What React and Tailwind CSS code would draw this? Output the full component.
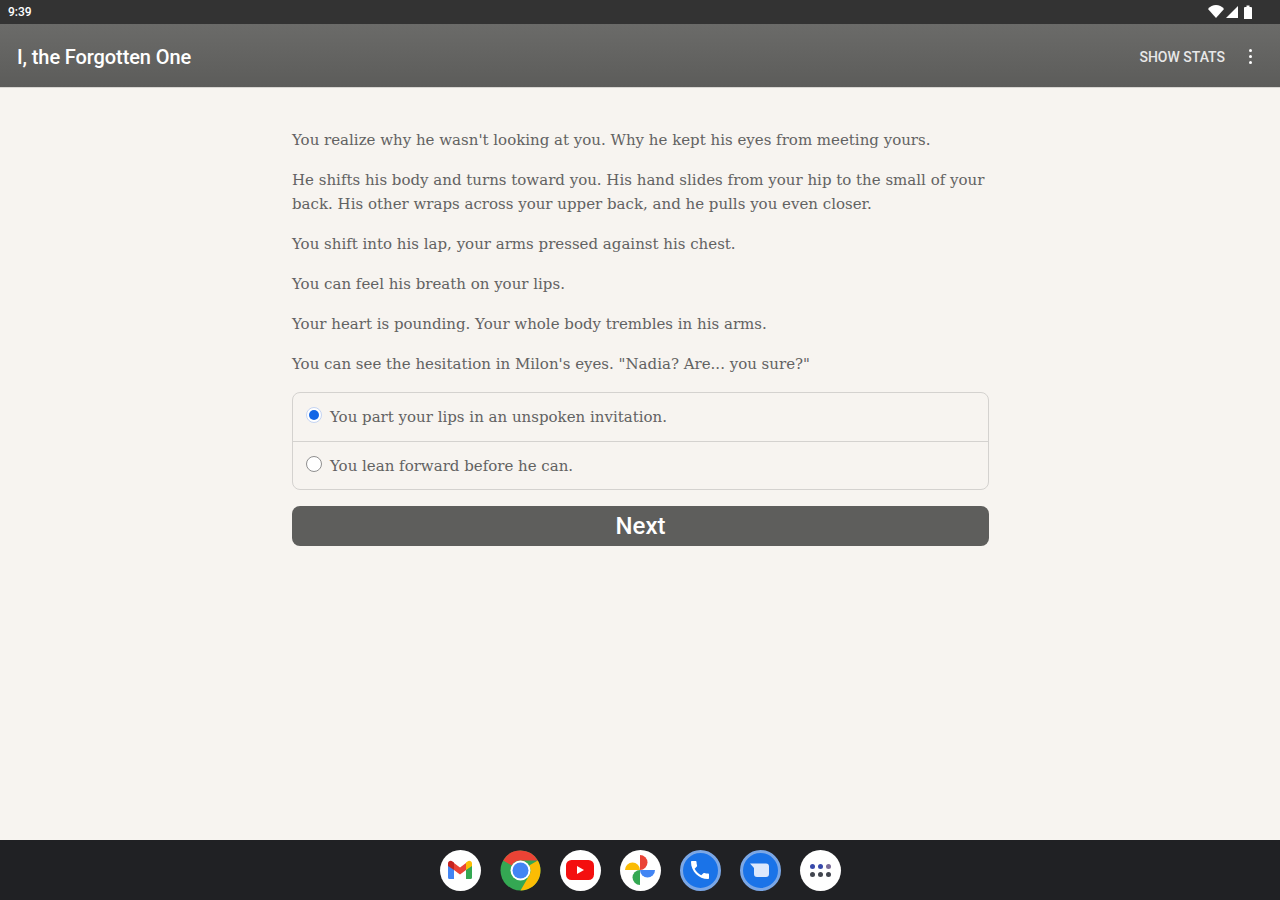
const paragraphs = [
  "You realize why he wasn't looking at you. Why he kept his eyes from meeting yours.",
  'He shifts his body and turns toward you. His hand slides from your hip to the small of your back. His other wraps across your upper back, and he pulls you even closer.',
  'You shift into his lap, your arms pressed against his chest.',
  'You can feel his breath on your lips.',
  'Your heart is pounding. Your whole body trembles in his arms.',
  'You can see the hesitation in Milon\'s eyes. "Nadia? Are... you sure?"',
]

const choices = [
  { label: 'You part your lips in an unspoken invitation.', selected: true },
  { label: 'You lean forward before he can.', selected: false },
]

function StatusIcons() {
  return (
    <svg width="47" height="16" viewBox="0 0 47 16" fill="white">
      <path d="M0 5C4 -0.500 12 -0.500 16 5L8 14Z" />
      <path d="M30 2V14H18Z" />
      <path d="M36 4a1 1 0 0 1 1-1h1.500V1.500h3V3H43a1 1 0 0 1 1 1V15h-8Z" />
    </svg>
  )
}

function GmailIcon() {
  return (
    <svg width="28" height="22" viewBox="0 0 28 22" fill="none">
      <path d="M2 20V6l6 4.500V20H3.500A1.500 1.500 0 0 1 2 18.500Z" fill="#4285f4" />
      <path d="M26 20V6l-6 4.500V20h4.500a1.500 1.500 0 0 0 1.500-1.500Z" fill="#34a853" />
      <path d="M8 11V4l6 4.500L20 4v7l-6 4.500Z" fill="#ea4335" />
      <path d="M2 7V4.500C2 2 4.800 1 6.500 2.400L8 3.500V11Z" fill="#c5221f" />
      <path d="M26 7V4.500C26 2 23.200 1 21.500 2.400L20 3.500V11Z" fill="#fbbc04" />
    </svg>
  )
}

function ChromeIcon() {
  return (
    <svg width="41" height="41" viewBox="0 0 41 41">
      <circle cx="20.500" cy="20.500" r="20" fill="#34a853" />
      <path d="M20.500 .5A20 20 0 0 1 37.800 10.500H20.500A10 10 0 0 0 11.800 15.500L3.200 10.500A20 20 0 0 1 20.500 .5Z" fill="#ea4335" />
      <path d="M37.800 10.500A20 20 0 0 1 20.500 40.500L29.200 25.500A10 10 0 0 0 29.200 15.500Z" fill="#fbbc04" />
      <circle cx="20.500" cy="20.500" r="10" fill="white" />
      <circle cx="20.500" cy="20.500" r="8" fill="#4285f4" />
    </svg>
  )
}

function YoutubeIcon() {
  return (
    <svg width="28" height="20" viewBox="0 0 28 20">
      <rect width="28" height="20" rx="5.500" fill="#f40f0f" />
      <path d="M11 6v8l7-4Z" fill="white" />
    </svg>
  )
}

function PhotosIcon() {
  return (
    <svg width="30" height="30" viewBox="0 0 32 32">
      <path d="M8 8a8 8 0 0 1 8 8H0a8 8 0 0 1 8-8Z" fill="#fbbc04" />
      <path d="M16 0a8 8 0 0 1 0 16Z" fill="#ea4335" />
      <path d="M32 16a8 8 0 0 1-16 0Z" fill="#4285f4" />
      <path d="M16 16v16a8 8 0 0 1 0-16Z" fill="#34a853" />
    </svg>
  )
}

function CallIcon() {
  return (
    <svg width="24" height="24" viewBox="0 0 24 24" fill="white">
      <path d="M20 15.500c-1.250 0-2.450-.2-3.570-.57-.35-.11-.74-.03-1.020.24l-2.200 2.200c-2.830-1.440-5.150-3.750-6.590-6.590l2.200-2.210c.28-.26.36-.65.25-1C8.700 6.450 8.500 5.250 8.500 4c0-.55-.45-1-1-1H4c-.55 0-1 .45-1 1 0 9.390 7.610 17 17 17 .55 0 1-.45 1-1v-3.500c0-.55-.45-1-1-1z" />
    </svg>
  )
}

function MessagesIcon() {
  return (
    <svg width="20" height="15" viewBox="0 0 20 15" fill="#dce8fc">
      <path d="M0 0.500H16a3 3 0 0 1 3 3V11a3 3 0 0 1-3 3H7a3 3 0 0 1-3-3V5Z" />
    </svg>
  )
}

function DockIcon({ className = 'bg-white', children }) {
  return (
    <div className={`flex h-[41px] w-[41px] items-center justify-center rounded-full ${className}`}>
      {children}
    </div>
  )
}

export default function App() {
  return (
    <div className="flex h-[900px] flex-col bg-[#f7f4f0]">
      <div className="flex h-6 shrink-0 items-center justify-between bg-[#333333] pl-2 pr-[25px]">
        <span className="font-['Roboto',sans-serif] text-xs font-medium text-white">9:39</span>
        <StatusIcons />
      </div>

      <header className="flex h-16 shrink-0 items-center justify-between border-b border-[#d8d6d2] bg-gradient-to-b from-[#6b6b69] to-[#5c5c5a] pl-[17px] pr-7 pt-0.5 font-['Roboto',sans-serif] text-white">
        <h1 className="text-xl font-medium tracking-[-0.1px]">I, the Forgotten One</h1>
        <div className="flex items-center gap-6">
          <span className="text-sm font-medium text-[#e8e8e8]">SHOW STATS</span>
          <div className="flex flex-col gap-[3px]">
            <span className="h-[3px] w-[3px] rounded-full bg-white" />
            <span className="h-[3px] w-[3px] rounded-full bg-white" />
            <span className="h-[3px] w-[3px] rounded-full bg-white" />
          </div>
        </div>
      </header>

      <main className="flex-1 overflow-hidden pl-[292px]">
        <div className="w-[697px] pt-10 font-['DejaVu_Serif',serif] text-[15px] leading-6 text-[#626262]">
          <div className="space-y-4">
            {paragraphs.map((text) => (
              <p key={text}>{text}</p>
            ))}
          </div>

          <div className="mt-4 overflow-hidden rounded-lg border border-[#d4d2cf]">
            {choices.map((choice, index) => (
              <div
                key={choice.label}
                className={`flex h-12 items-center gap-2 pl-[13px] ${index > 0 ? 'border-t border-[#d4d2cf]' : ''}`}
              >
                {choice.selected ? (
                  <span className="-mt-1 flex h-4 w-4 items-center justify-center rounded-full border border-[#c4d4f2] bg-white">
                    <span className="h-2.5 w-2.5 rounded-full bg-[#1467e6]" />
                  </span>
                ) : (
                  <span className="-mt-1 h-4 w-4 rounded-full border border-[#8f8f8f] bg-white" />
                )}
                <span>{choice.label}</span>
              </div>
            ))}
          </div>

          <button className="mt-4 h-10 w-full rounded-lg bg-[#5e5e5c] font-['Roboto',sans-serif] text-2xl font-medium text-white">
            Next
          </button>
        </div>
      </main>

      <nav className="flex h-[60px] shrink-0 items-center justify-center gap-[19px] bg-[#202124]">
        <DockIcon><GmailIcon /></DockIcon>
        <ChromeIcon />
        <DockIcon><YoutubeIcon /></DockIcon>
        <DockIcon><PhotosIcon /></DockIcon>
        <DockIcon className="border-[3px] border-[#7ba7e6] bg-[#1a73e8]">
          <CallIcon />
        </DockIcon>
        <DockIcon className="border-[3px] border-[#7ba7e6] bg-[#1a73e8]">
          <MessagesIcon />
        </DockIcon>
        <DockIcon>
          <div className="grid grid-cols-3 gap-[3px]">
            {['#3849ab', '#3849ab', '#7a6b98', '#41454f', '#41454f', '#41454f'].map((color, i) => (
              <span key={i} className="h-[5px] w-[5px] rounded-full" style={{ backgroundColor: color }} />
            ))}
          </div>
        </DockIcon>
      </nav>
    </div>
  )
}
